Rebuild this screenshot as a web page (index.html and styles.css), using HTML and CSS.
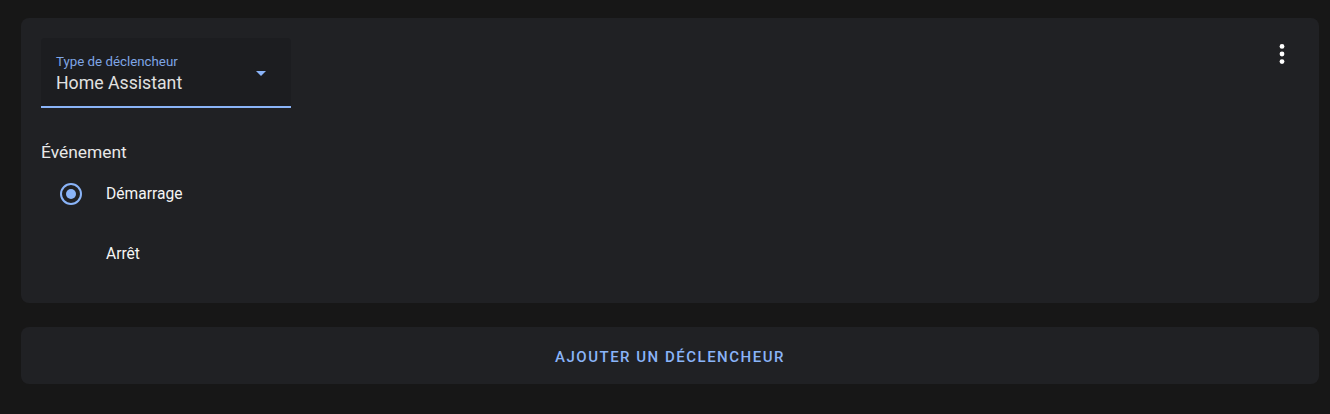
FILE: index.html
```html
<!DOCTYPE html>
<html>
<head>
	<title>Déclencheurs</title>
	<link rel="stylesheet" href="styles.css">
</head>
<body>
	<div class="page">
		<div class="card trigger">
			<div class="head">
				<div class="select">
					<div class="select-text">
						<div class="select-label">Type de déclencheur</div>
						<div class="select-value">Home Assistant</div>
					</div>
					<svg class="arrow" width="10" height="5" viewBox="0 0 10 5"><path d="M0 0L10 0L5 5Z"/></svg>
				</div>
				<div class="menu">
					<svg width="24" height="30" viewBox="0 0 24 30">
						<circle cx="12" cy="7.4" r="2.4"/>
						<circle cx="12" cy="15" r="2.4"/>
						<circle cx="12" cy="22.6" r="2.4"/>
					</svg>
				</div>
			</div>
			<div class="group-title">Événement</div>
			<div class="radio-row">
				<div class="radio checked"><span class="dot"></span></div>
				<span class="radio-label">Démarrage</span>
			</div>
			<div class="radio-row">
				<div class="radio"></div>
				<span class="radio-label">Arrêt</span>
			</div>
		</div>
		<div class="card add">
			<span class="add-btn">Ajouter un déclencheur</span>
		</div>
	</div>
</body>
</html>
```

FILE: styles.css
```css
body {
  margin: 0;
  background-color: #171717;
  font-family: Roboto, "Noto Sans", sans-serif;
  color: #e1e1e1;
}

.page {
  padding: 18px 11px 0 21px;
}

.card {
  background-color: #202124;
  border-radius: 8px;
}

.trigger {
  padding: 20px 13px 19px 20px;
}

.head {
  display: flex;
  justify-content: space-between;
  align-items: flex-start;
}

.select {
  width: 250px;
  height: 68px;
  background-color: #1c1d20;
  border-bottom: 2px solid #8ab4f8;
  border-radius: 4px 4px 0 0;
  display: flex;
  align-items: center;
}

.select-text {
  flex: 1;
  align-self: flex-start;
  padding: 15px 0 0 15px;
}

.select-label {
  font-size: 13.3px;
  line-height: 18px;
  color: #7fa6e6;
}

.select-value {
  font-size: 17.7px;
  line-height: 24px;
  color: #e1e1e1;
}

.arrow {
  fill: #8ab4f8;
  margin-right: 25px;
  margin-top: 3px;
}

.menu {
  width: 48px;
  height: 48px;
  margin-top: -8px;
  display: flex;
  align-items: center;
  justify-content: center;
}

.menu svg {
  fill: #ffffff;
}

.group-title {
  margin-top: 32px;
  font-size: 17.4px;
  line-height: 24px;
  color: #e8e8e8;
}

.radio-row {
  height: 60px;
  display: flex;
  align-items: center;
}

.radio {
  width: 22px;
  height: 22px;
  margin-left: 19px;
  margin-right: 24px;
  box-sizing: border-box;
  border-radius: 50%;
  display: flex;
  align-items: center;
  justify-content: center;
}

.radio.checked {
  border: 2px solid #8ab4f8;
}

.dot {
  width: 10px;
  height: 10px;
  border-radius: 50%;
  background-color: #8ab4f8;
}

.radio-label {
  font-size: 15.6px;
  color: #f5f5f5;
}

.add {
  margin-top: 24px;
  height: 57px;
  display: flex;
  align-items: center;
  justify-content: center;
}

.add-btn {
  font-size: 15px;
  font-weight: 500;
  letter-spacing: 1.5px;
  text-transform: uppercase;
  color: #8ab4f8;
  margin-top: 2px;
}
```
